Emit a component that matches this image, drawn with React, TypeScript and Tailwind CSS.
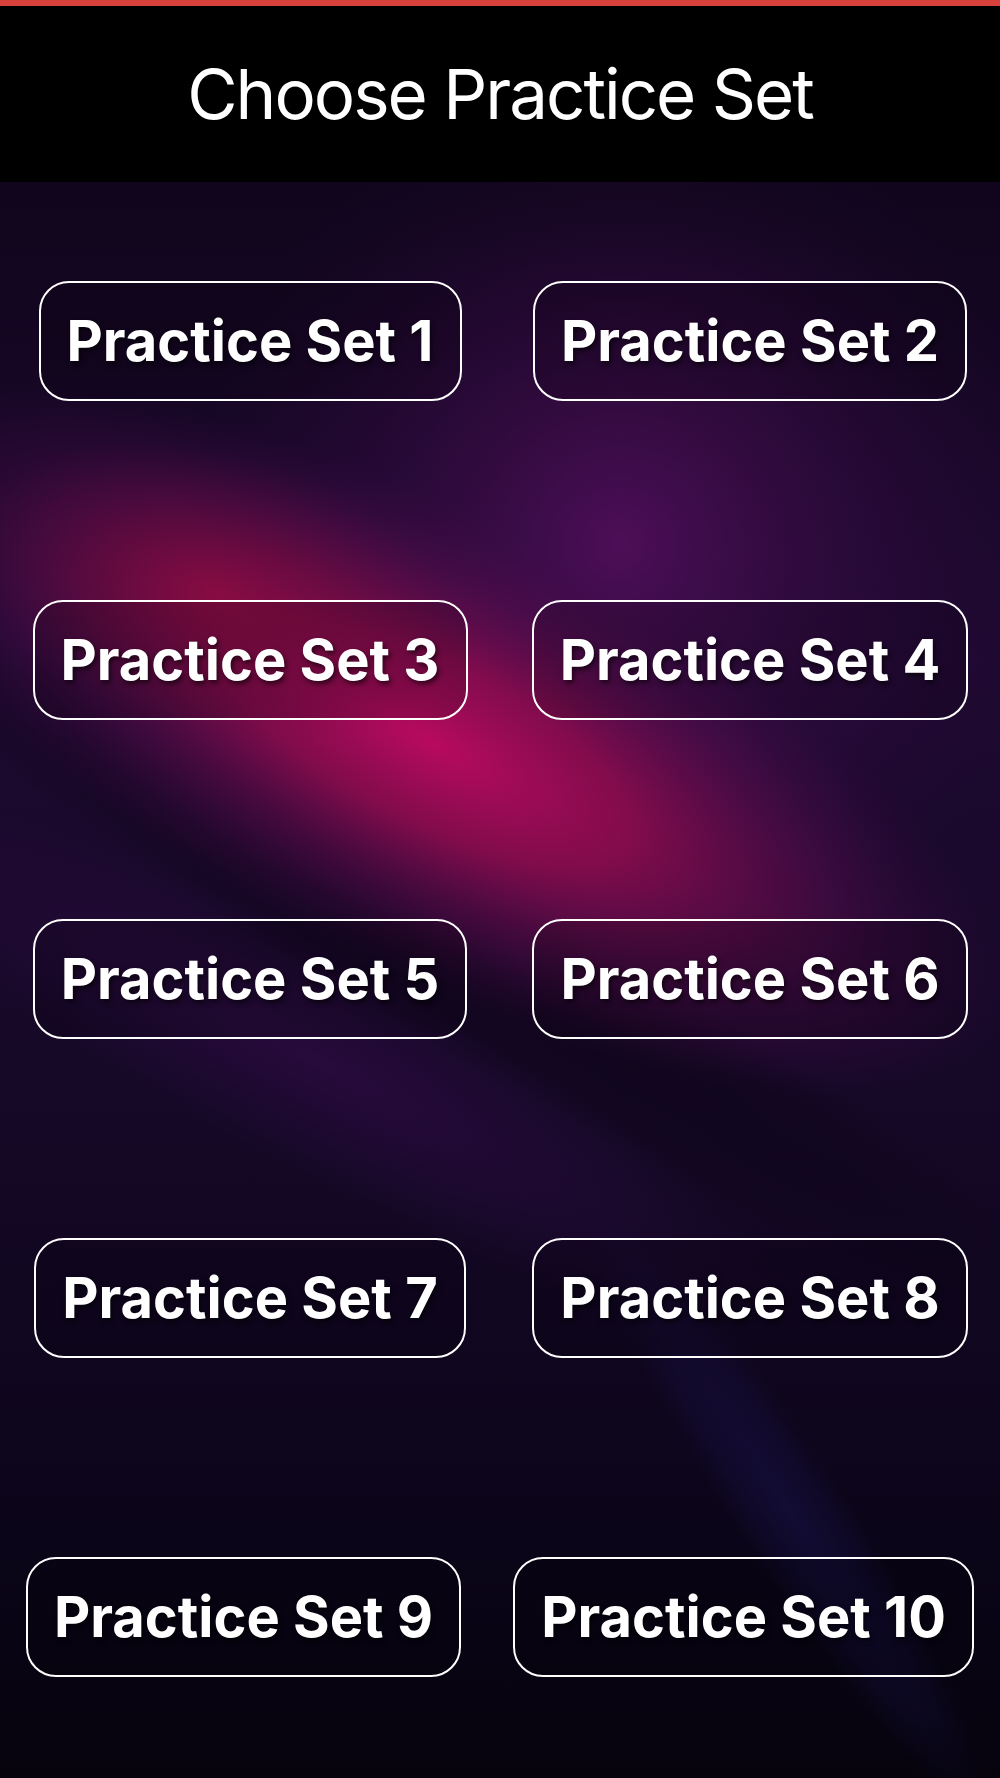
import React from 'react';

const sets = [1, 2, 3, 4, 5, 6, 7, 8];

const PracticeButton: React.FC<{ n: number }> = ({ n }) => (
  <button
    className="h-[120px] rounded-[30px] border-2 border-white bg-black/15 px-[26px] text-[56px] font-bold leading-none tracking-[0px] text-white [text-shadow:2px_3px_5px_rgba(0,0,0,0.6)]"
    style={{ fontFamily: 'Inter, "Noto Sans", sans-serif' }}
  >
    Practice Set {n}
  </button>
);

// wallpaper drawing behind the buttons (soft glows made of gradient ellipses)
const Wallpaper = () => (
  <svg className="absolute inset-0 h-full w-full" viewBox="0 0 1000 1596" preserveAspectRatio="none">
    <defs>
      <linearGradient id="base" x1="0" y1="0" x2="0" y2="1">
        <stop offset="0" stopColor="#10051c" />
        <stop offset="0.3" stopColor="#1e0930" />
        <stop offset="0.6" stopColor="#150826" />
        <stop offset="0.85" stopColor="#0b0519" />
        <stop offset="1" stopColor="#06030d" />
      </linearGradient>
      <radialGradient id="purple" cx="620" cy="360" r="440" gradientUnits="userSpaceOnUse">
        <stop offset="0" stopColor="#5e1066" stopOpacity="0.75" />
        <stop offset="1" stopColor="#2a0a3c" stopOpacity="0" />
      </radialGradient>
      <radialGradient id="pinkE">
        <stop offset="0" stopColor="#b80a60" stopOpacity="1" />
        <stop offset="0.35" stopColor="#920c50" stopOpacity="0.85" />
        <stop offset="0.7" stopColor="#580c4e" stopOpacity="0.5" />
        <stop offset="1" stopColor="#3a0a44" stopOpacity="0" />
      </radialGradient>
      <radialGradient id="redE">
        <stop offset="0" stopColor="#900c40" stopOpacity="0.75" />
        <stop offset="1" stopColor="#5a0a3a" stopOpacity="0" />
      </radialGradient>
      <radialGradient id="darkE">
        <stop offset="0" stopColor="#0a0314" stopOpacity="0.6" />
        <stop offset="0.6" stopColor="#0a0314" stopOpacity="0.35" />
        <stop offset="1" stopColor="#0a0314" stopOpacity="0" />
      </radialGradient>
      <radialGradient id="violetE">
        <stop offset="0" stopColor="#2e0c44" stopOpacity="0.7" />
        <stop offset="1" stopColor="#2e0c44" stopOpacity="0" />
      </radialGradient>
      <radialGradient id="blueE">
        <stop offset="0" stopColor="#1d165a" stopOpacity="0.4" />
        <stop offset="0.6" stopColor="#1a1450" stopOpacity="0.25" />
        <stop offset="1" stopColor="#1a1450" stopOpacity="0" />
      </radialGradient>
    </defs>
    <rect width="1000" height="1596" fill="url(#base)" />
    <rect width="1000" height="1596" fill="url(#purple)" />
    <ellipse cx="320" cy="880" rx="520" ry="110" transform="rotate(28 320 880)" fill="url(#violetE)" />
    <ellipse cx="480" cy="790" rx="740" ry="90" transform="rotate(30 480 790)" fill="url(#darkE)" />
    <ellipse cx="430" cy="560" rx="640" ry="230" transform="rotate(27 430 560)" fill="url(#pinkE)" />
    <ellipse cx="215" cy="410" rx="250" ry="140" transform="rotate(15 215 410)" fill="url(#redE)" />
    <ellipse cx="790" cy="1330" rx="360" ry="55" transform="rotate(57 790 1330)" fill="url(#blueE)" />
  </svg>
);

export default function App() {
  return (
    <div className="flex min-h-[1778px] w-full flex-col bg-black">
      <div className="h-[6px] bg-[#d8413b]" />
      <header className="flex h-[176px] items-center justify-center bg-black">
        <h1
          className="text-[69px] font-normal leading-none tracking-[-2px] text-white"
          style={{ fontFamily: 'Inter, "Noto Sans", sans-serif' }}
        >
          Choose Practice Set
        </h1>
      </header>
      <main className="relative flex-1 overflow-hidden">
        <Wallpaper />
        <div className="relative flex flex-col gap-[199px] pt-[99px] pb-[100px]">
          {[0, 2, 4, 6].map((i) => (
            <div key={i} className="grid grid-cols-2 justify-items-center">
              <PracticeButton n={sets[i]} />
              <PracticeButton n={sets[i + 1]} />
            </div>
          ))}
          <div className="flex justify-center gap-[52px]">
            <PracticeButton n={9} />
            <PracticeButton n={10} />
          </div>
        </div>
      </main>
    </div>
  );
}
